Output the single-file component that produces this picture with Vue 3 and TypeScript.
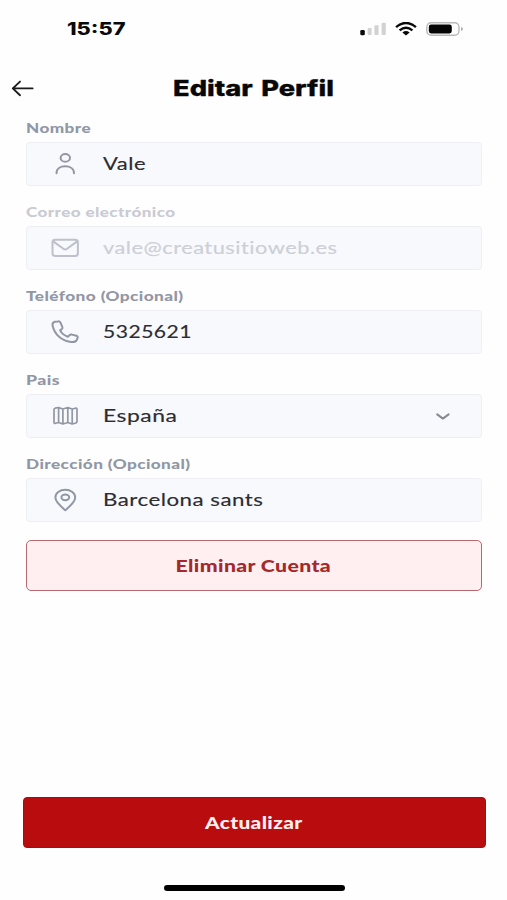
<script setup lang="ts">
import { ref, type Directive } from 'vue'

interface Field {
  id: string
  label: string
  labelWidth: number
  value: string
  valueWidth: number
  icon: 'user' | 'mail' | 'phone' | 'map' | 'pin'
  disabled?: boolean
  select?: boolean
}

const fields = ref<Field[]>([
  { id: 'name', label: 'Nombre', labelWidth: 65, value: 'Vale', valueWidth: 43, icon: 'user' },
  { id: 'email', label: 'Correo electrónico', labelWidth: 149.5, value: 'vale@creatusitioweb.es', valueWidth: 234.5, icon: 'mail', disabled: true },
  { id: 'phone', label: 'Teléfono (Opcional)', labelWidth: 157.5, value: '5325621', valueWidth: 89, icon: 'phone' },
  { id: 'country', label: 'Pais', labelWidth: 34, value: 'España', valueWidth: 74.5, icon: 'map', select: true },
  { id: 'address', label: 'Dirección (Opcional)', labelWidth: 164.5, value: 'Barcelona sants', valueWidth: 160.5, icon: 'pin' },
])

// Widens a line of text to the given width in pixels.
const vFit: Directive<HTMLElement, number> = {
  mounted(el, { value }) {
    el.style.transform = `scaleX(${value / el.getBoundingClientRect().width})`
  },
}
</script>

<template>
  <main class="screen">
    <header class="status">
      <span class="time"><span v-fit="58.5" class="fit left">15:57</span></span>
      <div class="indicators">
        <svg class="signal" width="27" height="14" viewBox="0 0 27 14">
          <rect x="0.3" y="8" width="4.5" height="5.2" rx="1.3" fill="#0a0a0a" />
          <rect x="7.6" y="6" width="4" height="7" rx="1" fill="#d2d2d2" />
          <rect x="14.4" y="3.2" width="4.2" height="9.8" rx="1" fill="#d2d2d2" />
          <rect x="21.6" y="0.8" width="4.2" height="12.2" rx="1" fill="#d2d2d2" />
        </svg>
        <svg class="wifi" width="22" height="14" viewBox="0 0 22 14" fill="none" stroke="#0a0a0a">
          <path d="M1.1 5.1Q11-3.1 20.9 5.1" stroke-width="2.5" />
          <path d="M4.6 8.4Q11 3.1 17.4 8.4" stroke-width="2.4" />
          <path d="M7.4 10.5Q11 7.6 14.6 10.5L11 13.4Z" fill="#0a0a0a" stroke="none" />
        </svg>
        <svg class="battery" width="38" height="14" viewBox="0 0 38 14">
          <rect x="0.8" y="0.8" width="32.2" height="12.4" rx="4.4" fill="none" stroke="#b9b9b9" stroke-width="1.4" />
          <rect x="2.8" y="2.6" width="23" height="8.8" rx="2.3" fill="#050505" />
          <path d="M35 4.9Q37 5.5 37 7T35 9.1Z" fill="#b0b0b0" />
        </svg>
      </div>
    </header>

    <nav class="titlebar">
      <button class="back" type="button" aria-label="Volver">
        <svg width="24" height="18" viewBox="0 0 24 18" fill="none" stroke="#1a1a1a" stroke-width="1.9" stroke-linecap="round" stroke-linejoin="round">
          <path d="M21.6 9.4H2M9 2.6L1.8 9.4L9 16.2" />
        </svg>
      </button>
      <h1 class="title"><span v-fit="161" class="fit">Editar Perfil</span></h1>
    </nav>

    <form class="form" @submit.prevent>
      <div v-for="f in fields" :key="f.id" class="field" :class="{ disabled: f.disabled }">
        <div class="label"><span v-fit="f.labelWidth" class="fit left">{{ f.label }}</span></div>
        <div class="box">
          <svg class="icon" width="30" height="26" viewBox="0 0 30 26" fill="none" stroke="currentColor" stroke-width="2" stroke-linecap="round" stroke-linejoin="round">
            <template v-if="f.icon === 'user'">
              <ellipse cx="15.3" cy="6.9" rx="4.7" ry="3.8" />
              <path d="M6.5 22.2C6.5 17.7 10.4 15.3 15.2 15.3S24 17.7 24 22.2" />
            </template>
            <template v-else-if="f.icon === 'mail'">
              <rect x="2.5" y="4.7" width="25.4" height="16.2" rx="2.6" />
              <path d="M3.2 6.4L13.4 13.8Q15.2 15 17 13.8L27.2 6.4" />
            </template>
            <template v-else-if="f.icon === 'phone'">
              <path d="M7.9 2.4L4.8 2.8C2.9 3.3 2.2 4.8 2.6 6.7C4.5 15.2 11.2 21.6 20.9 22.9C24 23.3 25.9 22.7 26.7 21L27.7 18.7C28 17.8 27.4 17.1 26.4 16.8L21.8 15.6C20.8 15.4 20.1 15.6 19.5 16.2L17.8 17.7C14.3 16.5 11.5 14.3 10.1 11.4L11.8 10.1C12.5 9.5 12.7 8.9 12.4 8.1L10.5 3.6C10 2.6 9.1 2.2 7.9 2.4Z" />
            </template>
            <template v-else-if="f.icon === 'map'">
              <path d="M4 6.5Q4 5.5 5.1 5.2L8.6 4.5L12.9 6L17.8 4.5L22.2 6L25.4 5.2Q27 4.9 27 6.3V18.6Q27 19.7 25.9 20L22.2 21L17.8 19.5L12.9 21L8.6 19.5L5.4 20.3Q4 20.6 4 19.3ZM8.6 4.5V19.5M12.9 6V21M17.8 4.5V19.5M22.2 6V21" stroke-width="1.7" />
            </template>
            <template v-else>
              <path d="M15.3 23.2C11.7 20 5.4 15.5 5.4 10.6C5.4 6.1 9.8 2.8 15.3 2.8S25.2 6.1 25.2 10.6C25.2 15.5 18.9 20 15.3 23.2Z" />
              <ellipse cx="15.3" cy="10.3" rx="3.9" ry="2.9" />
            </template>
          </svg>
          <div class="value"><span v-fit="f.valueWidth" class="fit left">{{ f.value }}</span></div>
          <svg v-if="f.select" class="chevron" width="16" height="10" viewBox="0 0 16 10" fill="none" stroke="#888a8f" stroke-width="2" stroke-linecap="round" stroke-linejoin="round">
            <path d="M2.2 3.4L7.9 7.6L13.6 3.4" />
          </svg>
        </div>
      </div>

      <button class="delete" type="button"><span v-fit="155.5" class="fit">Eliminar Cuenta</span></button>
      <button class="submit" type="submit"><span v-fit="97.5" class="fit">Actualizar</span></button>
    </form>

    <div class="home-indicator"></div>
  </main>
</template>

<style>
body {
  margin: 0;
  background: #fefefe;
}
</style>

<style scoped>
.screen {
  box-sizing: border-box;
  width: 507px;
  height: 900px;
  display: flex;
  flex-direction: column;
  overflow: hidden;
  background: #fefefe;
  font-family: Lato, "Liberation Sans", sans-serif;
  font-variant-ligatures: none;
}

button {
  box-sizing: border-box;
  margin: 0;
  padding: 0;
  font: inherit;
}

svg {
  display: block;
  flex: none;
}

.fit {
  display: inline-block;
  white-space: nowrap;
}

.left {
  transform-origin: left center;
}

.status {
  height: 58px;
  box-sizing: border-box;
  padding: 0 43px 0 67px;
  display: flex;
  align-items: center;
  justify-content: space-between;
}

.time {
  font: 800 17px/20px Inter, sans-serif;
  color: #0a0a0a;
}

.indicators {
  display: flex;
  align-items: center;
}

.wifi {
  margin-left: 8px;
}

.battery {
  margin-left: 9px;
}

.titlebar {
  height: 60px;
  display: grid;
  grid-template-columns: 36px 1fr 36px;
  align-items: center;
}

.back {
  padding-left: 11px;
  border: 0;
  background: none;
}

.title {
  margin: 0;
  text-align: center;
  font: 800 21.5px/26px Inter, sans-serif;
  word-spacing: 2px;
  color: #080808;
  -webkit-text-stroke: 0.3px currentColor;
}

.form {
  flex: 1;
  display: flex;
  flex-direction: column;
  padding: 0 22px 0 26px;
}

.field {
  height: 84px;
  flex: none;
  width: 456px;
}

.label {
  height: 23.5px;
  line-height: 21px;
  font-size: 12.8px;
  font-weight: 900;
  letter-spacing: 0.3px;
  color: #9297a5;
}

.box {
  box-sizing: border-box;
  height: 44.5px;
  padding: 0 30px 0 23px;
  display: flex;
  align-items: center;
  border: 1.5px solid #eeeff3;
  border-radius: 4px;
  background: #f8f9fd;
}

.icon {
  color: #9297a4;
}

.value {
  flex: 1;
  margin-left: 23px;
  font-size: 17.6px;
  line-height: 22px;
  letter-spacing: 0.4px;
  color: #2c2d32;
  -webkit-text-stroke: 0.15px currentColor;
}

.disabled .label {
  color: #cacbd2;
}

.disabled .icon {
  color: #bec1ca;
}

.disabled .value {
  color: #cccfd6;
}

.delete {
  flex: none;
  width: 456px;
  height: 51px;
  margin-top: 2px;
  padding: 0 2px 1px 0;
  border: 1.5px solid #b46a6e;
  border-radius: 5px;
  background: #ffeff1;
  color: #a5282b;
  font-size: 17px;
  font-weight: 900;
  letter-spacing: 0.3px;
}

.submit {
  flex: none;
  width: 463px;
  height: 51px;
  margin: auto 0 37px -3.5px;
  border: 1px solid #a90c10;
  border-radius: 4px;
  background: #b80c0f;
  color: #fff0ef;
  font-size: 17px;
  font-weight: 900;
  letter-spacing: 0.3px;
}

.home-indicator {
  flex: none;
  width: 181px;
  height: 6px;
  margin: 0 0 9px 163.5px;
  border-radius: 3px;
  background: #000;
}
</style>
